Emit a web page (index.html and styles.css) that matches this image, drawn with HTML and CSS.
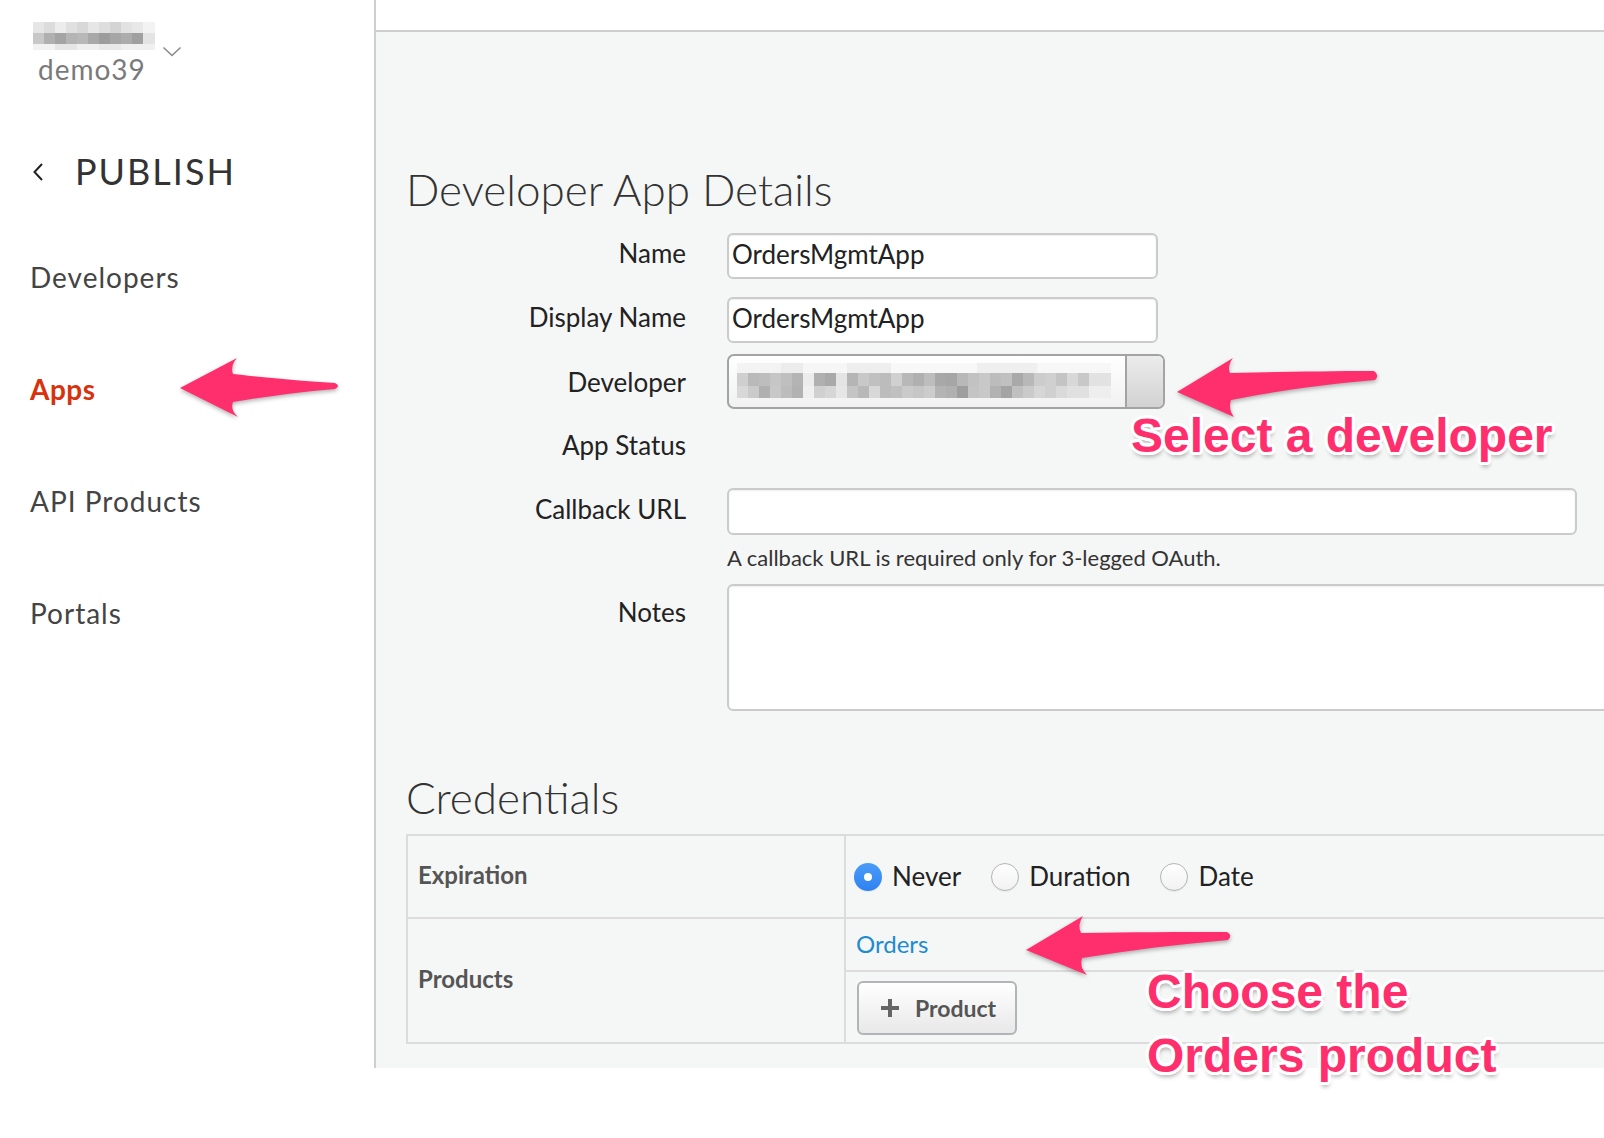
FILE: index.html
```html
<!DOCTYPE html>
<html lang="en">
<head>
<meta charset="utf-8">
<title>Developer App Details</title>
<link rel="stylesheet" href="styles.css">
</head>
<body>
<div class="app">
  <aside class="sidebar">
    <div class="acct-top">
      <div class="acct-name">
        <div class="px p1"></div>
        <div class="px p2"></div>
        <div class="px p3"></div>
      </div>
      <svg class="acct-chev" width="20" height="12" viewBox="0 0 20 12"><path d="M1.5 1.5 L10 9.5 L18.5 1.5" fill="none" stroke="#8a8a8a" stroke-width="1.6"/></svg>
    </div>
    <div class="org">demo39</div>
    <div class="section">
      <svg class="back" width="12" height="20" viewBox="0 0 12 20"><path d="M10 2 L2.5 10 L10 18" fill="none" stroke="#222" stroke-width="2"/></svg>
      <span>PUBLISH</span>
    </div>
    <nav class="nav">
      <a class="nav-item">Developers</a>
      <a class="nav-item active">Apps</a>
      <a class="nav-item">API Products</a>
      <a class="nav-item">Portals</a>
    </nav>
  </aside>
  <main class="main">
    <div class="topbar"></div>
    <div class="content">
      <h1 class="title">Developer App Details</h1>
      <div class="form">
        <div class="row row-name"><label class="lbl">Name</label><div class="input">OrdersMgmtApp</div></div>
        <div class="row row-display"><label class="lbl">Display Name</label><div class="input">OrdersMgmtApp</div></div>
        <div class="row row-dev"><label class="lbl">Developer</label>
          <div class="select">
            <div class="sel-val">
              <div class="spx s1"></div>
              <div class="spx s2"></div>
              <div class="spx s3"></div>
            </div>
            <div class="sel-btn"></div>
          </div>
        </div>
        <div class="row row-status"><label class="lbl">App Status</label><div></div></div>
        <div class="row row-callback"><label class="lbl">Callback URL</label><div class="input wide"></div></div>
        <div class="row row-help"><span></span><div class="help">A callback URL is required only for 3-legged OAuth.</div></div>
        <div class="row row-notes"><label class="lbl">Notes</label><div class="textarea"></div></div>
      </div>
      <h2 class="title sub">Credentials</h2>
      <div class="cred">
        <div class="cell-label c-exp">Expiration</div>
        <div class="cell-val c-radios">
          <span class="radio on"></span><span class="rlabel">Never</span>
          <span class="radio"></span><span class="rlabel">Duration</span>
          <span class="radio"></span><span class="rlabel">Date</span>
        </div>
        <div class="cell-label c-prod">Products</div>
        <div class="cell-val c-products">
          <div class="orders">Orders</div>
          <div class="btn-wrap">
            <div class="btn">
              <svg width="20" height="20" viewBox="0 0 20 20"><path d="M10 1 V19 M1 10 H19" stroke="#666" stroke-width="4"/></svg>
              <span>Product</span>
            </div>
          </div>
        </div>
      </div>
    </div>
  </main>
</div>

<svg class="annot" width="1604" height="1138" viewBox="0 0 1604 1138">
  <g class="arrows" fill="#ff2e6c">
    <path d="M180 388 L237 358 Q230 366 233 374 C270 378 300 381 335 383 Q341 386 335 389 C300 392 270 396 233 402 Q230 410 238 417 Z"/>
    <path d="M1177 392 L1233 358 Q1227 366 1230 373 C1280 372 1330 371 1374 371 Q1380 375 1375 380 C1330 384 1280 390 1231 400 Q1228 409 1234 417 Z"/>
    <path d="M1026 950 L1083 916 Q1077 925 1081 933 C1130 932 1180 932 1227 932 Q1233 935 1228 940 C1180 944 1130 950 1082 958 Q1079 967 1087 975 Z"/>
  </g>
</svg>
<div class="note n1">Select a developer</div>
<div class="note n2">Choose the<br>Orders product</div>
</body>
</html>
```

FILE: styles.css
```css
* { box-sizing: border-box; }
html, body { margin: 0; padding: 0; }
body {
  width: 1604px;
  height: 1138px;
  overflow: hidden;
  background: #fff;
  position: relative;
  font-family: Lato, "Open Sans", "Liberation Sans", sans-serif;
  color: #222;
}
.app {
  display: flex;
  width: 1604px;
  height: 1068px;
  overflow: hidden;
}

/* Sidebar */
.sidebar {
  width: 376px;
  flex: none;
  background: #fff;
  border-right: 2px solid #cfcfcf;
  padding: 22px 0 0 30px;
}
.acct-top { display: flex; height: 30px; margin-left: 3px; }
.acct-name { width: 122px; height: 28px; filter: blur(0.5px); }
.px { width: 122px; }
.p1 { height: 11px; background: linear-gradient(90deg, #e6e6e6 0 11px, #dcdcdc 11px 22px, #ececec 22px 33px, #e0e0e0 33px 44px, #d8d8d8 44px 55px, #e6e6e6 55px 66px, #dedede 66px 77px, #d4d4d4 77px 88px, #e2e2e2 88px 99px, #e8e8e8 99px 110px, #f3f3f3 110px 122px); }
.p2 { height: 11px; background: linear-gradient(90deg, #c8c8c8 0 11px, #b0b0b0 11px 22px, #a4a4a4 22px 33px, #b4b4b4 33px 44px, #b8b8b8 44px 55px, #a8a8a8 55px 66px, #9c9c9c 66px 77px, #a6a6a6 77px 88px, #acacac 88px 99px, #a0a0a0 99px 110px, #e4e4e4 110px 122px); }
.p3 { height: 6px; background: linear-gradient(90deg, #f2f2f2 0 22px, #e6e6e6 22px 44px, #efefef 44px 66px, #e8e8e8 66px 88px, #f0f0f0 88px 122px); }
.acct-chev { margin: 24px 0 0 7px; flex: none; }
.org {
  margin-left: 8px;
  font-size: 28px;
  line-height: 34px;
  letter-spacing: 1px;
  color: #7a7a7a;
}
.section {
  margin-top: 64px;
  height: 43px;
  display: flex;
  align-items: center;
}
.back { margin-left: 2px; flex: none; }
.section span {
  margin-left: 31px;
  font-size: 36px;
  line-height: 43px;
  letter-spacing: 2px;
  color: #333;
}
.nav {
  margin-top: 67px;
  display: flex;
  flex-direction: column;
  gap: 78px;
}
.nav-item {
  font-size: 28px;
  line-height: 34px;
  letter-spacing: 1px;
  color: #444;
}
.nav-item.active { color: #d8320d; font-weight: 700; letter-spacing: 0.5px; }

/* Main */
.main {
  flex: 1;
  min-width: 0;
  background: #f5f7f6;
  display: flex;
  flex-direction: column;
}
.topbar {
  height: 32px;
  flex: none;
  background: #fff;
  border-bottom: 2px solid #cfcfcf;
}
.content { padding: 131px 0 0 30px; }
.title {
  margin: 0;
  font-weight: 300;
  font-size: 44px;
  line-height: 53px;
  color: #333;
}
.title.sub { margin-top: 60px; }

.form { margin-top: 17px; }
.row {
  display: grid;
  grid-template-columns: 280px 1fr;
  column-gap: 41px;
  align-items: start;
}
.lbl {
  text-align: right;
  font-size: 26px;
  line-height: 31px;
  color: #222;
}
.row-name .lbl, .row-display .lbl { padding-top: 5px; }
.row-display { margin-top: 18px; }
.row-dev { margin-top: 11px; }
.row-dev .lbl { padding-top: 13px; }
.row-status { margin-top: 21px; }
.row-callback { margin-top: 27px; }
.row-callback .lbl { padding-top: 6px; }
.row-help { margin-top: 11px; }
.row-notes { margin-top: 14px; }
.row-notes .lbl { padding-top: 13px; }

.input {
  width: 431px;
  height: 46px;
  background: #fff;
  border: 2px solid #cbcbcb;
  border-radius: 6px;
  box-shadow: inset 0 1px 2px rgba(0,0,0,0.07);
  padding-left: 3px;
  font-size: 26px;
  line-height: 38px;
  color: #222;
}
.input.wide { width: 850px; height: 47px; }
.help {
  font-size: 22px;
  line-height: 24px;
  color: #333;
}
.textarea {
  width: 920px;
  height: 127px;
  background: #fff;
  border: 2px solid #cbcbcb;
  border-radius: 6px;
  box-shadow: inset 0 1px 2px rgba(0,0,0,0.07);
}

.select {
  width: 438px;
  height: 55px;
  display: flex;
  border: 2px solid #a3a3a3;
  border-radius: 7px;
  background: linear-gradient(#ffffff, #f1f1f1);
  overflow: hidden;
}
.sel-val {
  flex: 1;
  padding: 7px 0 0 8px;
  filter: blur(0.6px);
}
.spx { width: 374px; }
.s1 { height: 10px; background: linear-gradient(90deg, #f3f3f3 0 44px, #ececec 44px 66px, #f6f6f6 66px 110px, #eeeeee 110px 154px, #f8f8f8 154px 240px, #efefef 240px 300px, #f7f7f7 300px 374px); }
.s2 { height: 13px; background: linear-gradient(90deg, #cfcfcf 0 11px, #b9b9b9 11px 22px, #bdbdbd 22px 33px, #c6c6c6 33px 44px, #bfbfbf 44px 55px, #b4b4b4 55px 66px, #ececec 66px 77px, #b0b0b0 77px 88px, #a9a9a9 88px 99px, #e4e4e4 99px 110px, #b5b5b5 110px 121px, #c8c8c8 121px 132px, #c0c0c0 132px 143px, #bcbcbc 143px 154px, #d0d0d0 154px 165px, #b8b8b8 165px 176px, #b0b0b0 176px 187px, #bdbdbd 187px 198px, #a8a8a8 198px 209px, #a6a6a6 209px 220px, #b8b8b8 220px 231px, #c2c2c2 231px 242px, #c8c8c8 242px 253px, #bcbcbc 253px 264px, #c0c0c0 264px 275px, #a9a9a9 275px 286px, #b8b8b8 286px 297px, #cccccc 297px 308px, #d0d0d0 308px 319px, #c4c4c4 319px 330px, #d8d8d8 330px 341px, #c8c8c8 341px 352px, #e2e2e2 352px 374px); }
.s3 { height: 12px; background: linear-gradient(90deg, #d8d8d8 0 11px, #cacaca 11px 22px, #b0b0b0 22px 33px, #c8c8c8 33px 44px, #bcbcbc 44px 55px, #b2b2b2 55px 66px, #f0f0f0 66px 77px, #d0d0d0 77px 88px, #d6d6d6 88px 99px, #e6e6e6 99px 110px, #c4c4c4 110px 121px, #b8b8b8 121px 132px, #d8d8d8 132px 143px, #bcbcbc 143px 154px, #c0c0c0 154px 165px, #cacaca 165px 176px, #c6c6c6 176px 187px, #cccccc 187px 198px, #b4b4b4 198px 209px, #b0b0b0 209px 220px, #9e9e9e 220px 231px, #c4c4c4 231px 242px, #c8c8c8 242px 253px, #b2b2b2 253px 264px, #a4a4a4 264px 275px, #c0c0c0 275px 286px, #cacaca 286px 297px, #d6d6d6 297px 308px, #d0d0d0 308px 319px, #dadada 319px 330px, #e0e0e0 330px 352px, #eeeeee 352px 374px); }
.sel-btn {
  width: 38px;
  flex: none;
  border-left: 2px solid #a3a3a3;
  background: linear-gradient(#ececec, #d2d2d2);
}

/* Credentials table */
.cred {
  margin-top: 10px;
  width: 1300px;
  border: 2px solid #dcdcdc;
  display: grid;
  grid-template-columns: 438px 1fr;
  grid-template-rows: 83px 123px;
}
.cell-label {
  border-right: 2px solid #dcdcdc;
  display: flex;
  align-items: center;
  padding-left: 10px;
  font-weight: 700;
  font-size: 24px;
  color: #555;
}
.c-exp { border-bottom: 2px solid #dcdcdc; padding-bottom: 5px; }
.c-prod { padding-bottom: 4px; }
.c-radios {
  border-bottom: 2px solid #dcdcdc;
  display: flex;
  align-items: center;
  padding-left: 8px;
}
.radio {
  width: 28px;
  height: 28px;
  flex: none;
  border-radius: 50%;
  background: linear-gradient(#ffffff, #f2f2f2);
  border: 1px solid #b4b4b4;
  box-shadow: 0 1px 1px rgba(0,0,0,0.06);
  margin-left: 30px;
  position: relative;
}
.radio.on {
  margin-left: 0;
  border: none;
  background: linear-gradient(#4a9cf8, #2f82f0);
}
.radio.on::after {
  content: "";
  position: absolute;
  left: 10px;
  top: 10px;
  width: 8px;
  height: 8px;
  border-radius: 50%;
  background: #fff;
}
.rlabel {
  margin-left: 10px;
  font-size: 26px;
  line-height: 31px;
  color: #222;
}
.c-products { display: flex; flex-direction: column; }
.orders {
  height: 53px;
  flex: none;
  border-bottom: 2px solid #dcdcdc;
  display: flex;
  align-items: center;
  padding-left: 10px;
  padding-bottom: 3px;
  font-size: 24px;
  color: #1e8bd0;
}
.btn-wrap { padding: 9px 0 0 11px; }
.btn {
  width: 160px;
  height: 54px;
  border: 2px solid #b0b5b8;
  border-radius: 6px;
  background: linear-gradient(#ffffff, #e8e8e8);
  display: flex;
  align-items: center;
  padding-left: 21px;
}
.btn span {
  margin-left: 15px;
  font-weight: 700;
  font-size: 23px;
  color: #555;
}

/* Annotations (overlay) */
.annot {
  position: absolute;
  left: 0;
  top: 0;
  pointer-events: none;
}
.arrows { filter: drop-shadow(0 2px 2px rgba(0,0,0,0.3)); }
.note {
  position: absolute;
  font-family: "Liberation Sans", Arial, sans-serif;
  font-weight: 700;
  font-size: 48px;
  color: #ff2e6c;
  white-space: nowrap;
  text-shadow:
    -3px 0 0 #fff, 3px 0 0 #fff, 0 -3px 0 #fff, 0 3px 0 #fff,
    -2px -2px 0 #fff, 2px -2px 0 #fff, -2px 2px 0 #fff, 2px 2px 0 #fff,
    -3px -1px 0 #fff, 3px -1px 0 #fff, -3px 1px 0 #fff, 3px 1px 0 #fff,
    -1px -3px 0 #fff, 1px -3px 0 #fff, -1px 3px 0 #fff, 1px 3px 0 #fff,
    1px 5px 4px rgba(0,0,0,0.3);
}
.n1 { left: 1131px; top: 412px; line-height: 48px; }
.n2 { left: 1147px; top: 960px; line-height: 64px; }
```
